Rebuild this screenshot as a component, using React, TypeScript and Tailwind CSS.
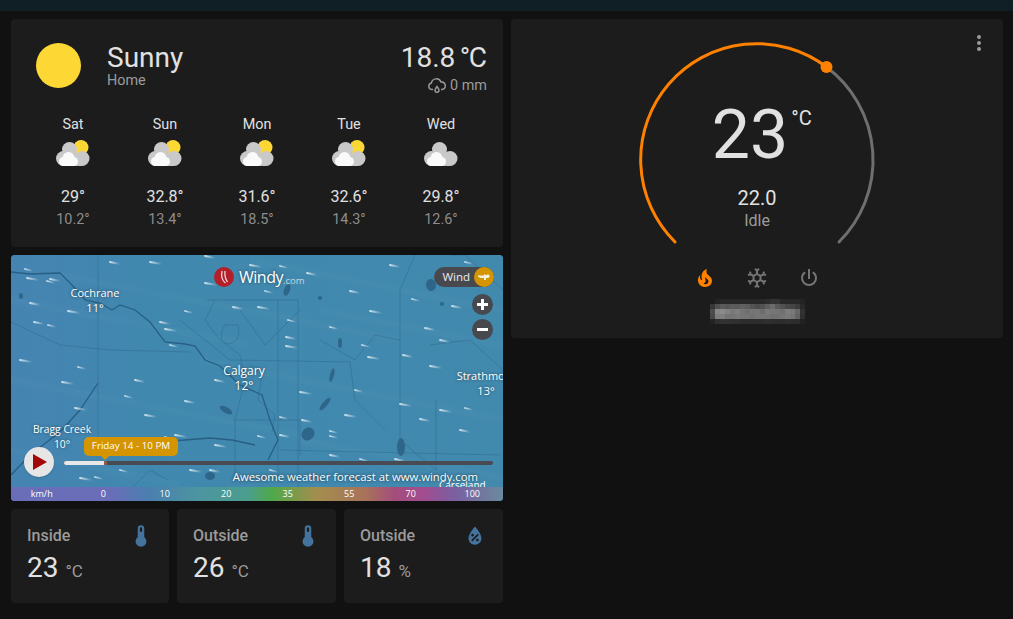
import React from "react";

const FIRE = "M17.66 11.2C17.43 10.9 17.15 10.64 16.89 10.38C16.22 9.78 15.46 9.35 14.82 8.72C13.33 7.26 13 4.85 13.95 3C13 3.23 12.17 3.75 11.46 4.32C8.87 6.4 7.85 10.07 9.07 13.22C9.11 13.32 9.15 13.42 9.15 13.55C9.15 13.77 9 13.97 8.8 14.05C8.57 14.15 8.33 14.09 8.14 13.93C8.08 13.88 8.04 13.83 8 13.76C6.87 12.33 6.69 10.28 7.45 8.64C5.78 10 4.87 12.3 5 14.47C5.06 14.97 5.12 15.47 5.29 15.97C5.43 16.57 5.7 17.17 6 17.7C7.08 19.43 8.95 20.67 10.96 20.92C13.1 21.19 15.39 20.8 17.03 19.32C18.86 17.66 19.5 15 18.56 12.72L18.43 12.46C18.22 12 17.66 11.2 17.66 11.2M14.5 17.5C14.22 17.74 13.76 18 13.4 18.1C12.28 18.5 11.16 17.94 10.5 17.28C11.69 17 12.4 16.12 12.61 15.23C12.78 14.43 12.46 13.77 12.33 13C12.21 12.26 12.23 11.63 12.5 10.94C12.69 11.32 12.89 11.7 13.13 12C13.9 13 15.11 13.44 15.37 14.8C15.41 14.94 15.43 15.08 15.43 15.23C15.46 16.05 15.1 16.95 14.5 17.5H14.5Z";
const SNOW = "M20.79,13.95L18.46,14.57L16.46,13.44V10.56L18.46,9.43L20.79,10.05L21.31,8.12L19.54,7.65L20,5.88L18.07,5.36L17.45,7.69L15.45,8.82L13,7.38V5.12L14.71,3.41L13.29,2L12,3.29L10.71,2L9.29,3.41L11,5.12V7.38L8.5,8.82L6.5,7.69L5.92,5.36L4,5.88L4.47,7.65L2.7,8.12L3.22,10.05L5.55,9.43L7.55,10.56V13.45L5.55,14.58L3.22,13.96L2.7,15.89L4.47,16.36L4,18.12L5.93,18.64L6.55,16.31L8.55,15.18L11,16.62V18.88L9.29,20.59L10.71,22L12,20.71L13.29,22L14.7,20.59L13,18.88V16.62L15.5,15.17L17.5,16.3L18.12,18.63L20,18.12L19.53,16.35L21.3,15.88L20.79,13.95M9.5,10.56L12,9.11L14.5,10.56V13.44L12,14.89L9.5,13.44V10.56Z";
const POWER = "M16.56,5.44L15.11,6.89C16.84,7.94 18,9.83 18,12A6,6 0 0,1 12,18A6,6 0 0,1 6,12C6,9.83 7.16,7.94 8.88,6.88L7.44,5.44C5.36,6.88 4,9.28 4,12A8,8 0 0,0 12,20A8,8 0 0,0 20,12C20,9.28 18.64,6.88 16.56,5.44M13,3H11V13H13";
const DOTS = "M12,16A2,2 0 0,1 14,18A2,2 0 0,1 12,20A2,2 0 0,1 10,18A2,2 0 0,1 12,16M12,10A2,2 0 0,1 14,12A2,2 0 0,1 12,14A2,2 0 0,1 10,12A2,2 0 0,1 12,10M12,4A2,2 0 0,1 14,6A2,2 0 0,1 12,8A2,2 0 0,1 10,6A2,2 0 0,1 12,4Z";
const THERMO = "M15 13V5A3 3 0 0 0 9 5V13A5 5 0 1 0 15 13M12 4A1 1 0 0 1 13 5V8H11V5A1 1 0 0 1 12 4Z";
const WATER = "M12,3.25C12,3.25 6,10 6,14C6,17.32 8.69,20 12,20A6,6 0 0,0 18,14C18,10 12,3.25 12,3.25M14.47,9.97L15.53,11.03L9.53,17.03L8.47,15.97M9.75,10A1.25,1.25 0 0,1 11,11.25A1.25,1.25 0 0,1 9.75,12.5A1.25,1.25 0 0,1 8.5,11.25A1.25,1.25 0 0,1 9.75,10M14.25,14.5A1.25,1.25 0 0,1 15.5,15.75A1.25,1.25 0 0,1 14.25,17A1.25,1.25 0 0,1 13,15.75A1.25,1.25 0 0,1 14.25,14.5Z";

function Mdi({ d, className }: { d: string; className: string }) {
  return (
    <svg viewBox="0 0 24 24" className={className} fill="currentColor">
      <path d={d} />
    </svg>
  );
}

function CloudIcon({ sun }: { sun: boolean }) {
  return (
    <svg viewBox="0 0 34 28" className="w-[34px] h-[28px]">
      {sun && <circle cx="25" cy="8.5" r="7.5" fill="#fdd835" />}
      <g fill="#c9c9c9">
        <circle cx={sun ? 13.5 : 15.5} cy="10.5" r="7.5" />
        <circle cx="7.5" cy="19.5" r="7.5" />
        <circle cx="26" cy="19.5" r="7.5" />
        <rect x="8" y="14" width="18" height="13" />
      </g>
      <g fill="#fafafa">
        <circle cx="7.5" cy="22.5" r="4.5" />
        <circle cx="12.5" cy="19" r="6" />
        <circle cx="17.5" cy="22.5" r="4.5" />
        <rect x="7" y="21" width="11" height="6" />
      </g>
    </svg>
  );
}

const forecast = [
  { d: "Sat", h: "29°", l: "10.2°", sun: true },
  { d: "Sun", h: "32.8°", l: "13.4°", sun: true },
  { d: "Mon", h: "31.6°", l: "18.5°", sun: true },
  { d: "Tue", h: "32.6°", l: "14.3°", sun: true },
  { d: "Wed", h: "29.8°", l: "12.6°", sun: false },
];

function WeatherCard() {
  return (
    <div className="bg-[#1c1c1c] rounded h-[228px] px-4 pt-[21px]">
      <div className="flex items-start">
        <div className="w-[45px] h-[45px] rounded-full bg-[#fdd835] ml-[9px] mt-[3px]" />
        <div className="ml-[26px] flex-1">
          <div className="text-[28px] leading-[36px] text-[#e1e1e1]">Sunny</div>
          <div className="text-[14.4px] leading-[14px] text-[#9b9b9b] -mt-[2px]">Home</div>
        </div>
        <div className="flex flex-col items-end">
          <div className="text-[28px] leading-[36px] text-[#e1e1e1] [word-spacing:-2.5px]">
            18.8 <span className="tracking-[-1.5px]">°</span>C
          </div>
          <div className="flex items-center text-[#9b9b9b] text-[14.4px] leading-[18px]">
            <svg viewBox="0 0 20 20" className="w-[20px] h-[20px] mr-[3px]" fill="none" stroke="currentColor" strokeWidth="1.4">
              <path d="M6 13.5H4.8a3.3 3.3 0 0 1-.4-6.5 5 5 0 0 1 9.6-1 3.8 3.8 0 0 1 1.2 7.5H14" />
              <path d="M10 10.5c-1.2 1.6-2 2.6-2 3.8a2 2 0 0 0 4 0c0-1.2-.8-2.2-2-3.8z" />
            </svg>
            0 mm
          </div>
        </div>
      </div>
      <div className="grid grid-cols-5 mt-[19px]">
        {forecast.map((f) => (
          <div key={f.d} className="flex flex-col items-center">
            <div className="text-[14.4px] leading-[20px] text-[#e1e1e1]">{f.d}</div>
            <div className="mt-[4px] h-[28px]"><CloudIcon sun={f.sun} /></div>
            <div className="text-[16px] leading-[20px] text-[#e1e1e1] mt-[20px]">{f.h}</div>
            <div className="text-[14.4px] leading-[20px] text-[#8d8d8d] mt-[3px]">{f.l}</div>
          </div>
        ))}
      </div>
    </div>
  );
}

const streaks: [number, number][] = [
  [25,269],[50,279],[27,278],[47,281],[30,303],[68,311],[48,325],[34,322],[20,360],[78,367],[205,256],[250,265],[280,266],[307,273],[205,283],[265,291],[350,291],[370,311],[412,299],[452,306],[480,307],[185,311],[233,307],[258,307],[288,320],[160,322],[165,329],[170,345],[286,337],[286,346],[330,327],[425,328],[368,357],[362,345],[403,355],[430,366],[125,396],[185,401],[145,415],[280,417],[302,420],[345,415],[330,431],[420,419],[400,404],[465,408],[135,380],[62,382],[258,436],[280,435],[175,435],[330,436],[395,459],[440,410],[360,459],[210,470],[80,478],[95,477],[215,380],[75,408],[165,437],[390,265],[440,275],[465,262],[440,340],[300,392],[355,390],[460,430],[215,445],[270,470],[330,455],[190,470],[120,470],[110,262],[150,262],
];

const lines = [
  "M11 272 L30 274 L60 273 L72 285 L85 300 L100 303 L112 310 L120 305 L135 310 L150 322 L165 342 L185 344 L195 346 L205 360 L220 366 L240 385 L262 395 L270 420 L278 440 L268 460",
  "M98 383 L80 410 L60 432 L30 455 L11 475",
  "M100 442 L160 442 L210 438 L232 440 L255 445",
];
const roads = [
  "M207 300 L298 300 L298 370 L298 490",
  "M215 300 L205 320 L220 340 L240 355 L245 380 L235 420 L235 480",
  "M180 320 L230 360 L350 362 L355 400 L385 430",
  "M11 322 L60 345 L110 350 L190 352",
  "M98 255 L98 375 L98 445",
  "M278 300 L278 480",
  "M240 310 L265 345 L300 310",
  "M225 325 C210 350 245 350 238 325 Z",
  "M415 255 L400 290 L400 440 L436 470",
  "M320 340 L355 360 L375 335 L400 340",
  "M233 420 L300 420 L300 455",
  "M280 450 L500 455",
  "M436 400 L436 470",
  "M450 255 L465 255 L503 290",
  "M430 345 L470 340 L503 370",
  "M120 500 L150 470 L168 480",
  "M250 365 L262 375 L258 400 L275 415 L272 432",
];
const lakes: [number, number, number, number, number][] = [
  [332,375,2,7,15],[325,404,2.5,8,40],[308,434,6,7,40],[401,447,4,9,0],[287,290,3,6,20],[431,285,5,6,-10],[320,298,2,2,0],[210,476,5,4,0],[21,296,2,3,0],[226,410,7,3,30],[340,343,2,5,0],[442,304,2,2,0],
];
const haze = [
  "M11 300 L250 345","M60 275 L400 340","M250 260 L503 310","M11 380 L300 435","M200 360 L503 420","M320 310 L503 345","M11 450 L180 485","M300 440 L503 478",
];

function MapLabel({ x, y, name, temp, size }: { x: string; y: string; name: string; temp: string; size: string }) {
  return (
    <div className={`absolute ${x} ${y} -translate-x-1/2 text-center text-white whitespace-nowrap ${size} leading-[15px] [text-shadow:0_0_3px_rgba(0,0,0,0.5)]`}>
      <div>{name}</div>
      <div>{temp}</div>
    </div>
  );
}

function MapBackdrop() {
  return (
    <svg viewBox="11 255 492 246" className="absolute inset-0 w-full h-full">
      <defs>
        <linearGradient id="sea" x1="0" y1="0" x2="1" y2="0">
          <stop offset="0" stopColor="#4584b2" />
          <stop offset="0.3" stopColor="#4088ae" />
          <stop offset="1" stopColor="#4289ae" />
        </linearGradient>
        <linearGradient id="wind" x1="0" y1="0" x2="1" y2="0">
          <stop offset="0" stopColor="#ffffff" stopOpacity="0.75" />
          <stop offset="1" stopColor="#ffffff" stopOpacity="0" />
        </linearGradient>
      </defs>
      <rect x="11" y="255" width="492" height="246" fill="url(#sea)" />
      <g stroke="#ffffff" strokeOpacity="0.02" strokeWidth="7" fill="none">
        {haze.map((d, i) => <path key={i} d={d} />)}
      </g>
      <g stroke="#2f6a8e" strokeOpacity="0.5" strokeWidth="1" fill="none">
        {roads.map((d, i) => <path key={i} d={d} />)}
      </g>
      <g stroke="#285f84" strokeWidth="1.3" fill="none">
        {lines.map((d, i) => <path key={i} d={d} />)}
      </g>
      <g fill="#2e6689">
        {lakes.map(([x, y, rx, ry, r], i) => (
          <ellipse key={i} cx={x} cy={y} rx={rx} ry={ry} transform={`rotate(${r} ${x} ${y})`} />
        ))}
      </g>
      <g stroke="url(#wind)" strokeWidth="1.8" strokeLinecap="round">
        {streaks.map(([x, y], i) => <line key={i} x1={x} y1={y} x2={x + 8 + (i % 3) * 2} y2={y + 2} />)}
      </g>
    </svg>
  );
}

function WindyMap() {
  const legend = ["km/h", "0", "10", "20", "35", "55", "70", "100"];
  return (
    <div className="relative h-[246px] rounded overflow-hidden bg-[#4289ae] font-['Open_Sans',sans-serif]">
      <MapBackdrop />
      <MapLabel x="left-[84px]" y="top-[30px]" name="Cochrane" temp="11°" size="text-[11px]" />
      <MapLabel x="left-[233px]" y="top-[108px]" name="Calgary" temp="12°" size="text-[12px]" />
      <MapLabel x="left-[475px]" y="top-[113px]" name="Strathmore" temp="13°" size="text-[11px]" />
      <MapLabel x="left-[51px]" y="top-[167px]" name="Bragg Creek" temp="10°" size="text-[10.3px]" />
      <div className="absolute left-[428px] top-[224px] text-[10px] leading-[12px] text-white">Carseland</div>

      <div className="absolute left-[203px] top-[12px] flex items-center">
        <svg viewBox="0 0 20 20" className="w-[20px] h-[20px]">
          <circle cx="10" cy="10" r="10" fill="#b3202a" />
          <path d="M8 4c-1 5-.5 9 3.500 12M11 4c-.5 4 .5 8 2.500 11" stroke="#f6d7d7" strokeWidth="1.3" fill="none" />
        </svg>
        <span className="ml-[5px] text-[16px] leading-[20px] tracking-[-0.5px] font-medium text-white [text-shadow:0_0_3px_rgba(0,0,0,0.5)]">Windy</span>
        <span className="text-[9.5px] leading-[9px] mt-[7px] text-[#c6d6de]">.com</span>
      </div>

      <div className="absolute right-[10px] top-[12px] flex flex-col items-end">
        <div className="flex items-center h-[20px] rounded-full bg-[#47494f] pl-[8px] text-[11.5px] font-medium text-white/90 -mr-[1px]">
          <span className="mr-[4px]">Wind</span>
          <span className="w-[20px] h-[20px] rounded-full bg-[#d49500] flex items-center justify-center">
            <svg viewBox="0 0 12 8" className="w-[12px] h-[8px]" fill="#f5f1e0">
              <path d="M0 2.500h6V1l2 1h2l-1-1h1l2 2.500-2 1.500H8v2H6V5H2L1 4H0z" />
            </svg>
          </span>
        </div>
        <div className="mt-[7px] w-[21px] h-[21px] rounded-full bg-[#47494f] flex items-center justify-center relative">
          <span className="absolute w-[11px] h-[2.500px] bg-white" />
          <span className="absolute w-[2.500px] h-[11px] bg-white" />
        </div>
        <div className="mt-[4px] w-[21px] h-[21px] rounded-full bg-[#47494f] flex items-center justify-center">
          <span className="w-[11px] h-[2.500px] bg-white" />
        </div>
      </div>

      <div className="absolute left-[13px] top-[192px] w-[30px] h-[30px] rounded-full bg-[#e6e6e6] flex items-center justify-center shadow">
        <svg viewBox="0 0 14 16" className="w-[14px] h-[16px] ml-[2px]"><path d="M0 0L14 8L0 16z" fill="#a30606" /></svg>
      </div>
      <div className="absolute left-[53px] top-[206px] w-[429px] h-[4px] rounded-full bg-[#494b52] overflow-hidden flex">
        <div className="w-[40px] bg-[#e8e8e8]" />
        <div className="w-[3px] bg-[#8e5a50]" />
      </div>
      <div className="absolute left-[73px] top-[182px] w-[94px] h-[19px] rounded-[5px] bg-[#d49500] text-white text-[9.8px] font-medium flex items-center justify-center whitespace-nowrap">
        Friday 14 - 10 PM
        <span className="absolute left-[17px] -bottom-[4px] w-0 h-0 border-x-[4px] border-x-transparent border-t-[4px] border-t-[#d49500]" />
      </div>

      <div className="absolute right-[25px] top-[214px] text-[11.3px] leading-[16px] font-medium text-white whitespace-nowrap [text-shadow:0_0_3px_rgba(0,0,0,0.7)]">
        Awesome weather forecast at www.windy.com
      </div>

      <div className="absolute left-0 right-0 bottom-0 h-[14px] flex items-center text-white text-[9px] font-medium bg-[linear-gradient(90deg,#6a6db8_0%,#6a6db8_20%,#4a7fb0_28%,#4c95a0_38%,#4b9d8f_48%,#4fa84a_53%,#a38e4d_62%,#a8725a_72%,#a44d7c_78%,#a14d90_84%,#7b5fa0_90%,#6b8a9e_100%)]">
        {legend.map((t) => (
          <span key={t} className="flex-1 text-center">{t}</span>
        ))}
      </div>
    </div>
  );
}

function Sensor({ label, value, unit, icon, w }: { label: string; value: string; unit: string; icon: string; w: string }) {
  return (
    <div className={`bg-[#1c1c1c] rounded h-[94px] pl-4 pr-[15px] pt-[16px] ${w}`}>
      <div className="flex items-start justify-between">
        <div className="text-[16px] leading-[22px] font-medium text-[#9b9b9b]">{label}</div>
        <Mdi d={icon} className="w-[26px] h-[26px] -mt-[2px] text-[#44739e]" />
      </div>
      <div className="flex items-baseline -mt-[1px]">
        <span className="text-[28px] leading-[40px] text-[#e1e1e1]">{value}</span>
        <span className="ml-[7px] text-[17px] text-[#9b9b9b]">{unit}</span>
      </div>
    </div>
  );
}

const mosaic = [
  [0,8,14,14,14,14,14,14,14,14,14,18,26,26,14,14,14,14,8],
  [30,58,70,66,72,70,78,72,62,55,60,75,90,70,60,50,46,36,14],
  [55,120,125,115,105,112,100,95,100,100,90,104,100,100,95,110,105,85,24],
  [50,110,112,100,100,105,100,100,95,100,100,100,95,95,100,105,100,80,22],
  [8,22,25,24,22,22,20,20,20,20,20,22,20,20,20,22,20,18,6],
];

function Mosaic() {
  return (
    <svg viewBox="0 0 95 25" className="w-[95px] h-[25px]" shapeRendering="crispEdges">
      {mosaic.flatMap((row, y) =>
        row.map((v, x) => (
          <rect key={`${x}-${y}`} x={x * 5} y={y * 5} width="5" height="5" fill="#ffffff" fillOpacity={v / 255} />
        ))
      )}
    </svg>
  );
}

function Thermostat() {
  return (
    <div className="relative bg-[#1c1c1c] rounded h-[319px] flex flex-col items-center">
      <Mdi d={DOTS} className="absolute right-[12px] top-[12px] w-[24px] h-[24px] text-[#9b9b9b]" />
      <div className="relative w-[240px] h-[212px] mt-[20px] shrink-0">
        <svg viewBox="0 0 240 212" className="absolute inset-0 w-full h-full" fill="none" strokeLinecap="round">
          <path d="M189.500 28 A116 116 0 0 1 202 203" stroke="#6f6f6f" strokeWidth="3" />
          <path d="M38 203 A116 116 0 0 1 189.500 28" stroke="#ff8100" strokeWidth="3" />
          <circle cx="189.500" cy="28" r="6" fill="#ff8100" />
        </svg>
        <div className="relative flex flex-col items-center pt-[58px]">
          <div className="relative text-[68px] leading-[76px] text-[#e1e1e1] -ml-[14px]">
            23
            <span className="absolute left-full top-[9px] ml-[3px] text-[20px] leading-[24px]">°C</span>
          </div>
          <div className="text-[20px] leading-[26px] text-[#e1e1e1] mt-[12px]">22.0</div>
          <div className="text-[16px] leading-[20px] text-[#9b9b9b]">Idle</div>
        </div>
      </div>
      <div className="flex items-center gap-[28px] mt-[15px]">
        <Mdi d={FIRE} className="w-[24px] h-[24px] text-[#ff8100]" />
        <Mdi d={SNOW} className="w-[24px] h-[24px] text-[#757575]" />
        <Mdi d={POWER} className="w-[24px] h-[24px] text-[#757575]" />
      </div>
      <div className="mt-[9px]"><Mosaic /></div>
    </div>
  );
}

export default function App() {
  return (
    <div className="w-[1013px] h-[619px] overflow-hidden bg-[#111111] font-['Roboto',sans-serif]">
      <div className="h-[11px] bg-[#101e25]" />
      <div className="flex gap-[8px] pl-[11px] pt-[8px]">
        <div className="w-[492px] flex flex-col gap-[8px]">
          <WeatherCard />
          <WindyMap />
          <div className="flex gap-[8px]">
            <Sensor label="Inside" value="23" unit="°C" w="w-[158px]" icon={THERMO} />
            <Sensor label="Outside" value="26" unit="°C" w="w-[159px]" icon={THERMO} />
            <Sensor label="Outside" value="18" unit="%" w="w-[159px]" icon={WATER} />
          </div>
        </div>
        <div className="w-[492px]">
          <Thermostat />
        </div>
      </div>
    </div>
  );
}
